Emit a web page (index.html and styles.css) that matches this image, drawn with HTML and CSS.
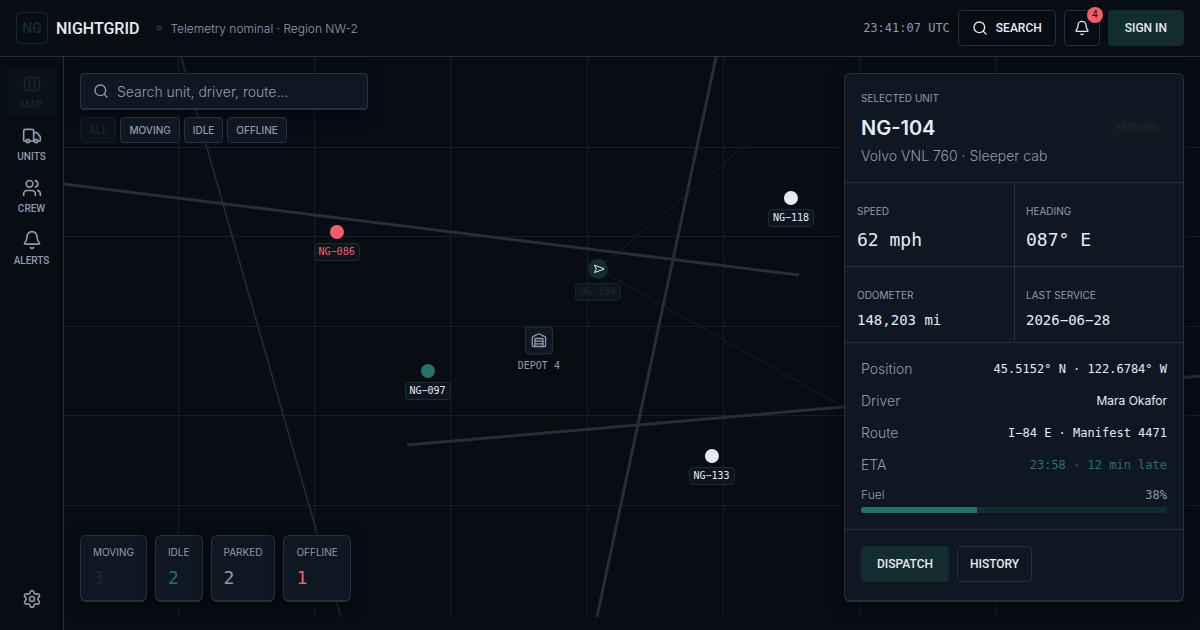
FILE: index.html
```html
<!DOCTYPE html>
<html lang="en">
<head>
<meta charset="utf-8">
<meta name="viewport" content="width=device-width, initial-scale=1">
<title>Nightgrid</title>
<link rel="stylesheet" href="styles.css">
</head>
<body>
<svg class="sprite" aria-hidden="true">
  <symbol id="i-search" viewBox="0 0 24 24"><circle cx="11" cy="11" r="8"/><path d="m21 21-4.3-4.3"/></symbol>
  <symbol id="i-bell" viewBox="0 0 24 24"><path d="M10.268 21a2 2 0 0 0 3.464 0"/><path d="M3.262 15.326A1 1 0 0 0 4 17h16a1 1 0 0 0 .74-1.673C19.41 13.956 18 12.499 18 8A6 6 0 0 0 6 8c0 4.499-1.411 5.956-2.738 7.326"/></symbol>
  <symbol id="i-map" viewBox="0 0 24 24"><path d="M14.106 5.553a2 2 0 0 0 1.788 0l3.659-1.83A1 1 0 0 1 21 4.619v12.764a1 1 0 0 1-.553.894l-4.553 2.277a2 2 0 0 1-1.788 0l-4.212-2.106a2 2 0 0 0-1.788 0l-3.659 1.83A1 1 0 0 1 3 19.381V6.618a1 1 0 0 1 .553-.894l4.553-2.277a2 2 0 0 1 1.788 0z"/><path d="M15 5.764v15M9 3.236v15"/></symbol>
  <symbol id="i-truck" viewBox="0 0 24 24"><path d="M14 18V6a2 2 0 0 0-2-2H4a2 2 0 0 0-2 2v11a1 1 0 0 0 1 1h2"/><path d="M15 18H9"/><path d="M19 18h2a1 1 0 0 0 1-1v-3.65a1 1 0 0 0-.22-.624l-3.48-4.35A1 1 0 0 0 17.52 8H14"/><circle cx="17" cy="18" r="2"/><circle cx="7" cy="18" r="2"/></symbol>
  <symbol id="i-users" viewBox="0 0 24 24"><path d="M16 21v-2a4 4 0 0 0-4-4H6a4 4 0 0 0-4 4v2"/><circle cx="9" cy="7" r="4"/><path d="M22 21v-2a4 4 0 0 0-3-3.87M16 3.13a4 4 0 0 1 0 7.75"/></symbol>
  <symbol id="i-gear" viewBox="0 0 24 24"><path d="M9.671 4.136a2.34 2.34 0 0 1 4.659 0 2.34 2.34 0 0 0 3.319 1.915 2.34 2.34 0 0 1 2.33 4.033 2.34 2.34 0 0 0 0 3.831 2.34 2.34 0 0 1-2.33 4.033 2.34 2.34 0 0 0-3.319 1.915 2.34 2.34 0 0 1-4.659 0 2.34 2.34 0 0 0-3.32-1.915 2.34 2.34 0 0 1-2.33-4.033 2.34 2.34 0 0 0 0-3.831A2.34 2.34 0 0 1 6.35 6.051a2.34 2.34 0 0 0 3.319-1.915"/><circle cx="12" cy="12" r="3"/></symbol>
  <symbol id="i-depot" viewBox="0 0 24 24"><path d="M18 21V10a1 1 0 0 0-1-1H7a1 1 0 0 0-1 1v11"/><path d="M22 19a2 2 0 0 1-2 2H4a2 2 0 0 1-2-2V8a2 2 0 0 1 1.132-1.803l7.95-3.974a2 2 0 0 1 1.837 0l7.948 3.974A2 2 0 0 1 22 8z"/><path d="M6 13h12M6 17h12"/></symbol>
  <symbol id="i-heading" viewBox="0 0 24 24"><path d="M25 12 5 19l4-7-4-7z"/></symbol>
</svg>

<header class="topbar">
  <span class="logo">NG</span>
  <span class="brand">NIGHTGRID</span>
  <span class="status"><span class="status-dot"></span>Telemetry nominal · Region NW-2</span>
  <div class="actions">
    <time class="clock">23:41:07 UTC</time>
    <button class="btn" type="button"><svg class="icon icon-sm"><use href="#i-search"/></svg>SEARCH</button>
    <button class="btn btn-icon" type="button" aria-label="Notifications"><svg class="icon icon-sm"><use href="#i-bell"/></svg><span class="count">4</span></button>
    <button class="btn btn-primary" type="button">SIGN IN</button>
  </div>
</header>

<div class="shell">
  <nav class="rail">
    <a class="rail-item active" href="#map"><svg class="icon"><use href="#i-map"/></svg>MAP</a>
    <a class="rail-item" href="#units"><svg class="icon"><use href="#i-truck"/></svg>UNITS</a>
    <a class="rail-item" href="#crew"><svg class="icon"><use href="#i-users"/></svg>CREW</a>
    <a class="rail-item" href="#alerts"><svg class="icon"><use href="#i-bell"/></svg>ALERTS</a>
    <button class="rail-item settings" type="button" aria-label="Settings"><svg class="icon"><use href="#i-gear"/></svg></button>
  </nav>

  <main class="map">
    <svg class="roads" viewBox="0 0 1136 560" preserveAspectRatio="none" aria-hidden="true">
      <path class="grid" d="M114.5 0v560M250.5 0v560M386.5 0v560M523.5 0v560M659.5 0v560M795.5 0v560M932.5 0v560M0 90.5h1136M0 179.5h1136M0 269.5h1136M0 358.5h1136M0 448.5h1136"/>
      <path class="track" d="M534 212 685 85M534 212 781 351"/>
      <path class="minor" d="M117 0 277 560"/>
      <path class="major" d="M0 127 735 218M652 0 533 560M343 388 1136 319"/>
    </svg>

    <div class="marker unit-118"><span class="dot"></span><span class="tag">NG−118</span></div>
    <div class="marker unit-086"><span class="dot"></span><span class="tag">NG−086</span></div>
    <div class="marker unit-104"><span class="dot"><svg class="icon"><use href="#i-heading"/></svg></span><span class="tag">NG−104</span></div>
    <div class="marker unit-097"><span class="dot"></span><span class="tag">NG−097</span></div>
    <div class="marker unit-133"><span class="dot"></span><span class="tag">NG−133</span></div>
    <div class="marker depot"><span class="depot-box"><svg class="icon icon-sm"><use href="#i-depot"/></svg></span><span class="depot-name">DEPOT 4</span></div>

    <div class="finder">
      <label class="search card"><svg class="icon icon-sm"><use href="#i-search"/></svg><input type="search" placeholder="Search unit, driver, route…" aria-label="Search unit, driver, route"></label>
      <div class="chips">
        <button class="chip selected" type="button">ALL</button>
        <button class="chip" type="button">MOVING</button>
        <button class="chip" type="button">IDLE</button>
        <button class="chip" type="button">OFFLINE</button>
      </div>
    </div>

    <dl class="totals">
      <div class="total card moving"><dt>MOVING</dt><dd>3</dd></div>
      <div class="total card idle"><dt>IDLE</dt><dd>2</dd></div>
      <div class="total card parked"><dt>PARKED</dt><dd>2</dd></div>
      <div class="total card offline"><dt>OFFLINE</dt><dd>1</dd></div>
    </dl>

    <aside class="panel card">
      <header class="panel-head">
        <p class="label">SELECTED UNIT</p>
        <div class="title-row"><h1>NG-104</h1><span class="badge">MOVING</span></div>
        <p class="model">Volvo VNL 760 · Sleeper cab</p>
      </header>
      <dl class="metrics">
        <div class="metric"><dt>SPEED</dt><dd class="large">62 mph</dd></div>
        <div class="metric"><dt>HEADING</dt><dd class="large">087° E</dd></div>
        <div class="metric"><dt>ODOMETER</dt><dd>148,203 mi</dd></div>
        <div class="metric"><dt>LAST SERVICE</dt><dd>2026−06−28</dd></div>
      </dl>
      <div class="details">
        <dl class="rows">
          <div class="row"><dt>Position</dt><dd>45.5152° N · 122.6784° W</dd></div>
          <div class="row"><dt>Driver</dt><dd class="person">Mara Okafor</dd></div>
          <div class="row"><dt>Route</dt><dd>I−84 E · Manifest 4471</dd></div>
          <div class="row"><dt>ETA</dt><dd class="late">23:58 · 12 min late</dd></div>
        </dl>
        <div class="fuel">
          <div class="fuel-head"><span>Fuel</span><span class="fuel-value">38%</span></div>
          <div class="bar"><div class="bar-fill" style="width:38%"></div></div>
        </div>
      </div>
      <footer class="panel-foot">
        <button class="btn btn-primary" type="button">DISPATCH</button>
        <button class="btn" type="button">HISTORY</button>
      </footer>
    </aside>
  </main>
</div>
</body>
</html>
```
FILE: styles.css
```css
:root {
  --bg: #080d14;
  --surface: #0f1722;
  --line: #262f3b;
  --text: #e5ebf5;
  --muted: #8f9bad;
  --teal-dark: #132c30;
  --teal: #27716d;
  --red: #f75c6c;
  --display: Roboto, "Liberation Sans", sans-serif;
  --body: Inter, "Liberation Sans", sans-serif;
  --mono: "DejaVu Sans Mono", "Liberation Mono", monospace;
}

* { box-sizing: border-box; }

body {
  margin: 0;
  height: 100vh;
  display: flex;
  flex-direction: column;
  background: var(--bg);
  color: var(--text);
  font-family: var(--body);
  font-size: 14px;
  font-weight: 300;
}

p, h1, dl, dd { margin: 0; }
button { font: inherit; color: inherit; cursor: pointer; }
.sprite { position: absolute; width: 0; height: 0; }

.icon {
  width: 20px;
  height: 20px;
  flex: none;
  fill: none;
  stroke: currentColor;
  stroke-width: 2;
  stroke-linecap: round;
  stroke-linejoin: round;
}
.icon-sm { width: 16px; height: 16px; }

/* Top bar */
.topbar {
  display: flex;
  align-items: center;
  gap: 8px;
  height: 57px;
  flex: none;
  padding: 0 16px;
  border-bottom: 1px solid var(--line);
}
.logo {
  display: grid;
  place-items: center;
  width: 32px;
  height: 32px;
  border: 1px solid #14292d;
  border-radius: 4px;
  color: var(--teal-dark);
  font: 500 14px var(--display);
}
.brand { font: 500 16px var(--display); }
.status {
  display: flex;
  align-items: center;
  gap: 8px;
  padding-left: 9px;
  color: var(--muted);
  font-size: 12px;
}
.status-dot { width: 6px; height: 6px; border-radius: 50%; background: var(--teal-dark); }
.actions { display: flex; align-items: center; gap: 8px; margin-left: auto; }
.clock { color: var(--muted); font: 12px var(--mono); }

.btn {
  position: relative;
  display: flex;
  align-items: center;
  justify-content: center;
  gap: 8px;
  height: 36px;
  padding: 0 13px;
  border: 1px solid var(--line);
  border-radius: 4px;
  background: transparent;
  font: 500 12px var(--display);
}
.btn-icon { width: 36px; padding: 0; }
.btn-primary { padding: 0 16px; border-color: var(--teal-dark); background: var(--teal-dark); }
.count {
  position: absolute;
  top: -4px;
  right: -4px;
  width: 16px;
  height: 16px;
  border-radius: 50%;
  background: var(--red);
  color: var(--bg);
  font: 10px/16px var(--display);
  text-align: center;
}

/* Navigation rail */
.shell { display: flex; flex: 1; min-height: 0; }
.rail {
  display: flex;
  flex-direction: column;
  align-items: center;
  gap: 4px;
  width: 64px;
  flex: none;
  padding: 12px 0 7px;
  border-right: 1px solid var(--line);
}
.rail-item {
  display: flex;
  flex-direction: column;
  align-items: center;
  justify-content: center;
  gap: 4px;
  width: 48px;
  height: 48px;
  border: 0;
  border-radius: 6px;
  background: none;
  color: var(--muted);
  font: 500 10px/14px var(--display);
  text-decoration: none;
}
.rail-item.active { background: #0a1118; color: #14292d; }
.settings { margin-top: auto; }

/* Map canvas */
.map { position: relative; flex: 1; min-width: 0; overflow: hidden; }
.roads { position: absolute; top: 0; left: 0; width: 100%; height: calc(100% - 13px); fill: none; }
.grid { stroke: #161d26; }
.track { stroke: #171e27; }
.minor { stroke: #1f2630; stroke-width: 2; }
.major { stroke: #262e39; stroke-width: 3; }

.marker {
  position: absolute;
  display: flex;
  flex-direction: column;
  align-items: center;
  gap: 4px;
  transform: translate(-50%, -50%);
  font: 10px/12px var(--mono);
}
.dot { display: grid; place-items: center; width: 14px; height: 14px; border-radius: 50%; background: var(--text); }
.tag { padding: 2px 4px; border: 1px solid #202a36; border-radius: 4px; background: #0d151f; }
.unit-118 { left: 64%; top: 26.5%; }
.unit-086 { left: 24%; top: 32.5%; color: var(--red); }
.unit-086 .dot { background: var(--red); }
.unit-104 { left: 47%; top: 39%; color: var(--teal-dark); }
.unit-104 .dot { width: 20px; height: 20px; background: var(--teal-dark); color: var(--text); }
.unit-104 .icon { width: 12px; height: 12px; overflow: visible; }
.unit-104 .tag { border-color: #14252b; }
.unit-097 { left: 32%; top: 56.8%; }
.unit-097 .dot { background: var(--teal); }
.unit-133 { left: 57%; top: 71.5%; }
.depot { left: 41.8%; top: 51%; gap: 5px; color: var(--muted); }
.depot-box {
  display: grid;
  place-items: center;
  width: 28px;
  height: 28px;
  border: 1px solid var(--line);
  border-radius: 4px;
  background: var(--surface);
}

/* Floating surfaces */
.card {
  border: 1px solid var(--line);
  border-bottom-width: 2px;
  border-radius: 6px;
  background: var(--surface);
  box-shadow: 0 4px 16px rgba(0, 0, 0, 0.5);
}
.finder { position: absolute; top: 16px; left: 16px; display: flex; flex-direction: column; gap: 7px; }
.search {
  display: flex;
  align-items: center;
  gap: 8px;
  width: 288px;
  height: 37px;
  padding: 0 12px;
  border-radius: 4px;
  color: var(--muted);
}
.search input {
  flex: 1;
  min-width: 0;
  padding: 0;
  border: 0;
  outline: 0;
  background: none;
  color: var(--text);
  font: inherit;
}
.search input::placeholder { color: var(--muted); opacity: 1; }
.chips { display: flex; gap: 4px; }
.chip {
  height: 26px;
  padding: 0 8px;
  border: 1px solid var(--line);
  border-radius: 4px;
  background: var(--surface);
  color: var(--muted);
  font: 500 10px var(--body);
}
.chip.selected { border-color: #111c23; background: #0a1118; color: #14292d; }

.totals { position: absolute; left: 16px; bottom: 28px; display: flex; gap: 8px; }
.total { padding: 8px 12px; }
.label, .total dt, .metric dt { color: var(--muted); font: 400 10px/16px var(--body); }
.total dd { margin-top: 4px; font: 18px/28px var(--mono); }
.moving dd { color: var(--teal-dark); }
.idle dd { color: var(--teal); }
.parked dd { color: var(--muted); }
.offline dd { color: var(--red); }

/* Selected unit */
.panel { position: absolute; top: 16px; right: 16px; width: 340px; }
.panel-head { padding: 16px; }
.title-row { display: flex; align-items: center; justify-content: space-between; margin: 8px 0 4px; }
.title-row h1 { font: 600 20px/28px var(--body); }
.badge {
  padding: 2px 8px;
  border-radius: 4px;
  background: #0f1a23;
  color: #14292d;
  font: 500 11px/16px var(--display);
}
.model { color: var(--muted); line-height: 20px; }
.metrics { display: grid; grid-template-columns: 1fr 1fr; }
.metric { padding: 20px 12px 11px; border-top: 1px solid var(--line); }
.metric:nth-child(even) { padding-left: 11px; border-left: 1px solid var(--line); }
.metric dd { margin-top: 6px; font: 14px/22px var(--mono); }
.metric .large { font-size: 18px; line-height: 30px; }
.details { padding: 16px; border-top: 1px solid var(--line); border-bottom: 1px solid var(--line); }
.rows { display: flex; flex-direction: column; gap: 12px; }
.row { display: flex; align-items: center; justify-content: space-between; line-height: 20px; }
.row dt { color: var(--muted); }
.row dd { font: 12px/20px var(--mono); }
.row .person { font-family: var(--body); }
.row .late { color: var(--teal); }
.fuel { margin-top: 12px; color: var(--muted); font-size: 12px; line-height: 16px; }
.fuel-head { display: flex; justify-content: space-between; margin-bottom: 4px; }
.fuel-value { font-family: var(--mono); }
.bar { height: 6px; overflow: hidden; border-radius: 3px; background: var(--teal-dark); }
.bar-fill { height: 100%; background: var(--teal); }
.panel-foot { display: flex; gap: 8px; padding: 16px 16px 18px; }
.panel-foot .btn { padding: 0 12px; }
.panel-foot .btn-primary { padding: 0 15px; }
```
